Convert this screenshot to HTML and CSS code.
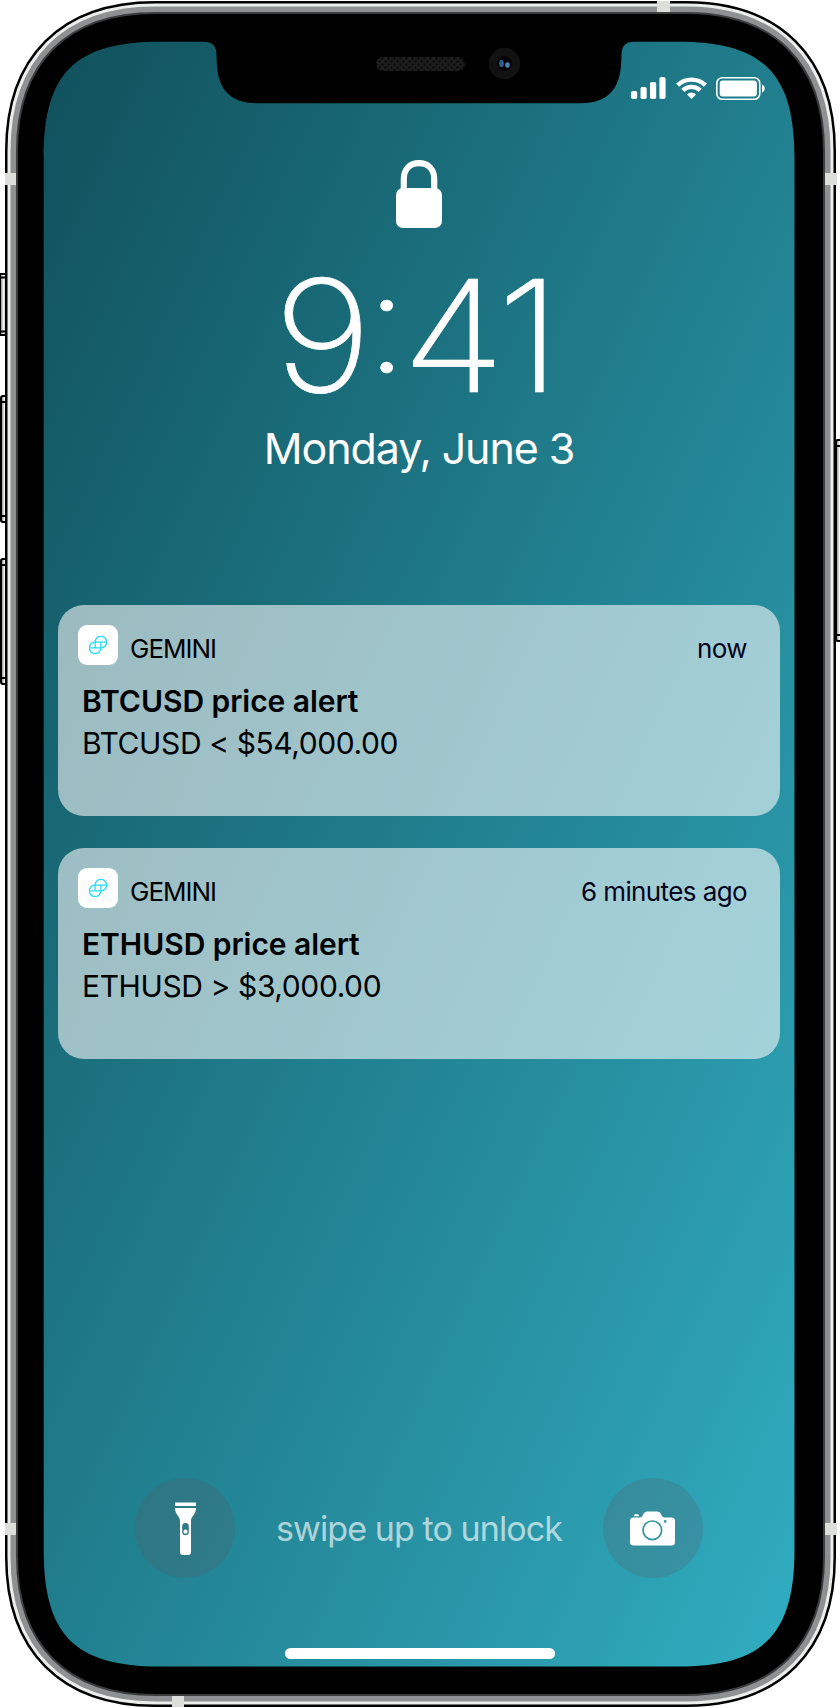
FILE: index.html
```
<!DOCTYPE html>
<html lang="en">
<head>
  <meta charset="UTF-8" />
  <meta name="viewport" content="width=device-width, initial-scale=1.0" />
  <title>Price Alerts</title>
  <link rel="stylesheet" href="styles.css">
</head>
<body>
  <svg width="0" height="0" class="defs">
    <symbol id="gemini" viewBox="0 0 18 18">
      <g fill="none" stroke="#26ddf9" stroke-width="1.3">
        <path d="M6.100 6.100A5.750 5.750 0 1 1 11.850 11.850V6.100M6.100 6.100H17.600" />
        <path d="M11.850 11.850A5.750 5.750 0 1 1 6.100 6.100V11.850M.4 11.850H11.850" />
      </g>
    </symbol>
  </svg>

  <div class="phone">
    <svg class="frame" viewBox="0 0 840 1708">
      <defs>
        <linearGradient id="metal" x1="0" x2="1">
          <stop offset="0" stop-color="#777" />
          <stop offset=".5" stop-color="#f4f4f4" />
          <stop offset="1" stop-color="#999" />
        </linearGradient>
        <pattern id="mesh" width="6" height="6" patternUnits="userSpaceOnUse">
          <rect width="6" height="6" fill="#1e1e1e" />
          <circle cx="1.5" cy="1.5" r="1.2" fill="#090909" />
          <circle cx="4.5" cy="4.5" r="1.2" fill="#090909" />
        </pattern>
        <path id="edge" d="M17 151C17 63 67 13 155 13H686C774 13 824 63 824 151V1557C824 1645 774 1695 686 1695H155C67 1695 17 1645 17 1557Z" />
      </defs>

      <!-- side buttons -->
      <g fill="url(#metal)" stroke="#000" stroke-width="2">
        <rect x="0" y="274" width="7" height="61" />
        <rect x="1" y="396" width="7" height="126" rx="2" />
        <rect x="1" y="559" width="7" height="125" rx="2" />
        <rect x="836" y="440" width="7" height="201" rx="2" />
      </g>
      <path d="M0 277.500H5M0 331.500H5M2 402H5M2 516H5M2 565H5M2 678H5M837 446H840M837 635H840" stroke="#000" stroke-width="2" />

      <!-- steel band -->
      <use href="#edge" stroke="#000" stroke-width="24" />
      <use href="#edge" stroke="#eceeec" stroke-width="19" />
      <use href="#edge" stroke="#8e9091" stroke-width="13" />
      <use href="#edge" stroke="#3c3d3e" stroke-width="2" />
      <g fill="#dcdfd9">
        <rect x="5" y="173" width="11" height="12" />
        <rect x="825" y="173" width="12" height="12" />
        <rect x="5" y="1523" width="11" height="12" />
        <rect x="825" y="1523" width="12" height="12" />
        <rect x="657" y="1" width="13" height="11" />
        <rect x="172" y="1696" width="12" height="11" />
      </g>

      <!-- speaker and camera -->
      <rect x="376" y="57" width="89" height="14" rx="7" fill="url(#mesh)" />
      <circle cx="504.5" cy="63.5" r="15.7" fill="#121212" />
      <circle cx="504.5" cy="63.5" r="7.5" fill="#020203" />
      <ellipse cx="501.5" cy="63.5" rx="2.3" ry="3.8" fill="#2e5f8c" />
      <ellipse cx="507.5" cy="65" rx="2.3" ry="2.8" fill="#4a83bd" />
    </svg>

    <main class="screen">
      <div class="status">
        <svg width="35" height="22" viewBox="0 0 35 22" fill="#fff">
          <rect x="0" y="14" width="6.2" height="8" rx="1.8" />
          <rect x="9.5" y="10" width="6.2" height="12" rx="1.8" />
          <rect x="19" y="5" width="6.2" height="17" rx="1.8" />
          <rect x="28.4" y="0" width="6.2" height="22" rx="1.8" />
        </svg>
        <svg class="wifi" width="31" height="22" viewBox="0 0 31 22" fill="none" stroke="#fff" stroke-width="4.4">
          <path d="M1.6 8.2A20 20 0 0 1 29.4 8.2" />
          <path d="M6.8 13.4A12.6 12.6 0 0 1 24.2 13.4" />
          <path d="M15.5 22L10.9 17.4A6.6 6.6 0 0 1 20.1 17.4Z" fill="#fff" stroke="none" />
        </svg>
        <svg class="battery" width="49" height="23" viewBox="0 0 49 23">
          <rect x=".8" y=".8" width="43" height="21.4" rx="5.5" fill="none" stroke="#fff" stroke-width="1.6" />
          <rect x="3.7" y="3.6" width="37.2" height="15.8" rx="3" fill="#fff" />
          <path d="M46 7.5C49.6 8.8 49.6 14.2 46 15.5Z" fill="#fff" />
        </svg>
      </div>

      <svg class="lock" width="46" height="68" viewBox="0 0 46 68">
        <path d="M7.8 30V19C7.8 9 14 3.2 23 3.2S38.2 9 38.2 19V30" fill="none" stroke="#fff" stroke-width="6.2" />
        <rect y="28" width="46" height="40" rx="7" fill="#fff" />
      </svg>
      <div class="clock">9<span class="colon">:</span>41</div>
      <div class="date">Monday, June 3</div>

      <section class="alerts">
        <article class="alert">
          <header class="alert-head">
            <span class="app-icon"><svg width="18" height="18"><use href="#gemini" /></svg></span>
            <span class="app-name">GEMINI</span>
            <time>now</time>
          </header>
          <h2>BTCUSD price alert</h2>
          <p>BTCUSD &lt; $54,000.00</p>
        </article>
        <article class="alert">
          <header class="alert-head">
            <span class="app-icon"><svg width="18" height="18"><use href="#gemini" /></svg></span>
            <span class="app-name">GEMINI</span>
            <time>6 minutes ago</time>
          </header>
          <h2>ETHUSD price alert</h2>
          <p>ETHUSD &gt; $3,000.00</p>
        </article>
      </section>

      <footer class="dock">
        <span class="round">
          <svg width="21" height="53" viewBox="0 0 21 53" fill="#fff">
            <path d="M0 .5H21V4H0Z" />
            <path fill-rule="evenodd" d="M0 6H21C21 13 16 14 16 19V50Q16 53 13 53H8Q5 53 5 50V19C5 14 0 13 0 6ZM10.5 21A3.3 3.3 0 0 0 7.2 24.3V30A3.3 3.3 0 0 0 13.8 30V24.3A3.3 3.3 0 0 0 10.5 21Z" />
            <circle cx="10.5" cy="29.7" r="2.1" />
          </svg>
        </span>
        <span class="swipe">swipe up to unlock</span>
        <span class="round">
          <svg class="camera" width="45" height="35" viewBox="0 0 45 35">
            <path fill="#fff" d="M3.5 6.500H10Q12 6.500 12.700 4.500L13.300 3Q14.300 .5 17 .5H27.500Q30 .5 31 3L31.600 4.500Q32.500 6.500 34.500 6.500H41.500Q45 6.500 45 10V31Q45 34.500 41.500 34.500H3.500Q0 34.500 0 31V10Q0 6.500 3.500 6.500ZM5 3.200H8Q9 3.200 9 5.200H4Q4 3.200 5 3.200Z" />
            <circle cx="22.3" cy="19.3" r="9.3" fill="none" stroke="#3593a4" stroke-width="1.7" />
            <circle cx="35.2" cy="10.4" r="1.3" fill="#3593a4" />
          </svg>
        </span>
      </footer>
      <div class="home-bar"></div>
    </main>
  </div>
</body>
</html>
```
FILE: styles.css
```
* { box-sizing: border-box; }
body { margin: 0; background: #fff; font-family: Inter, "Liberation Sans", sans-serif; }
h2, p { margin: 0; }
svg { display: block; flex: none; }
.defs { position: absolute; }

.phone { position: relative; width: 840px; height: 1708px; padding: 41px 45px 41px 43px; overflow: hidden; }
.frame { position: absolute; left: 0; top: 0; width: 840px; height: 1708px; }

.screen {
  position: relative;
  display: flex;
  flex-direction: column;
  align-items: center;
  width: 752px;
  height: 1626px;
  color: #fff;
  background: linear-gradient(to bottom right, #10505b, #31adc1);
  clip-path: path("M.7 117C.7 32 32 .7 117 .7H161Q173 .7 173.500 13C174 27 172 62.200 214 62.200H538C580 62.200 578 27 578.500 13Q579 .7 591 .7H635C720 .7 751.500 32 751.500 117V1509C751.500 1594 720 1625.500 635 1625.500H117C32 1625.500 .7 1594 .7 1509Z");
}

.status { display: flex; align-self: flex-end; height: 23px; margin: 36px 30px 0 0; }
.wifi { margin-left: 10px; }
.battery { margin-left: 9px; }

.lock { margin-top: 60px; margin-right: 1px; }
.clock { height: 190px; margin-top: 13px; margin-right: 9px; font-size: 156px; font-weight: 200; line-height: 190px; letter-spacing: -5.5px; transform: scaleX(1.08); -webkit-text-stroke: .7px #fff; }
.colon { font-size: 140px; line-height: 0; vertical-align: 20px; }
.date { margin-top: -10px; font-size: 43px; font-weight: 400; line-height: 54px; letter-spacing: -1.1px; }

.alerts { display: flex; flex-direction: column; gap: 32px; width: 722px; margin-top: 130px; }
.alert { height: 211px; padding: 20px 33px 0 20px; border-radius: 26px; background: rgba(250, 250, 250, .59); color: #000; }
.alert-head { display: flex; height: 41px; }
.app-icon { display: flex; align-items: center; justify-content: center; width: 40px; height: 40px; border-radius: 9px; background: #fff; }
.app-name { margin-left: 12px; font-size: 26px; line-height: 47px; letter-spacing: -1px; }
time { margin-left: auto; color: #04041c; font-size: 26px; line-height: 47px; letter-spacing: -.6px; }
.alert h2 { margin: 14px 0 0 4px; font-size: 30px; font-weight: 600; line-height: 42px; letter-spacing: -.05px; }
.alert p { margin-left: 4px; font-size: 30px; line-height: 42px; letter-spacing: -.4px; }

.dock { display: flex; align-items: center; justify-content: space-between; width: 568px; height: 100px; margin-top: auto; }
.round { display: flex; align-items: center; justify-content: center; width: 100px; height: 100px; border-radius: 50%; background: rgba(90, 87, 93, .23); }
.swipe { color: rgba(255, 255, 255, .65); font-size: 34px; letter-spacing: -.9px; }
.home-bar { width: 270px; height: 11px; margin: 70px 0 8px 2px; border-radius: 6px; background: #fff; }
```
